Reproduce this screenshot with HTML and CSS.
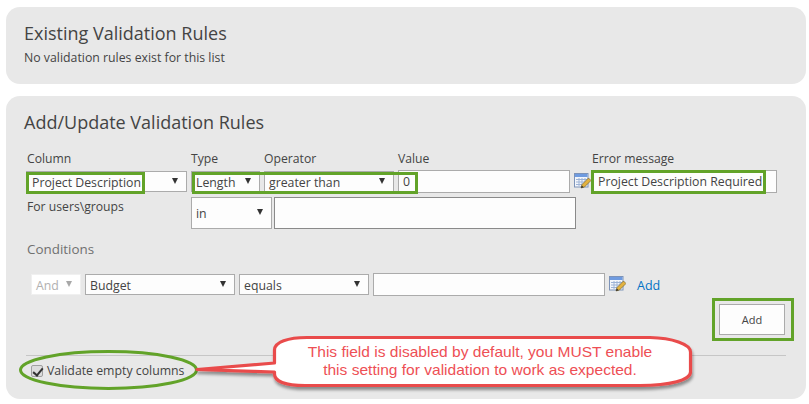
FILE: index.html
```html
<!DOCTYPE html>
<html lang="en">
<head>
<meta charset="utf-8">
<title>Validation Rules</title>
<link rel="stylesheet" href="styles.css">
</head>
<body>
<svg width="0" height="0" class="defs">
  <symbol id="picker" viewBox="0 0 17 17">
    <rect x="0.5" y="0.5" width="13.500" height="13.500" fill="#f3f6fb" stroke="#7d93b8"/>
    <rect x="1" y="1" width="12.500" height="3" fill="#6f9be0"/>
    <path d="M2 6.500h11M2 9h11M2 11.500h11M5 5v8M8 5v8M11 5v8" stroke="#9db3d6" stroke-width="1" fill="none"/>
    <path d="M7 15l1-3.500 6.500-6.500 2.500 2.500-6.500 6.500z" fill="#e3b23f" stroke="#6a5a2a" stroke-width="0.6"/>
    <path d="M7 15l.8-2.600 1.900 1.800z" fill="#2b2b2b"/>
  </symbol>
</svg>
<main class="page">
  <section class="panel panel-existing">
    <h2 class="title">Existing Validation Rules</h2>
    <p class="note">No validation rules exist for this list</p>
  </section>
  <section class="panel panel-add">
    <h2 class="title">Add/Update Validation Rules</h2>
    <div class="labels">
      <span class="lab w-column lab-first">Column</span>
      <span class="lab w-type">Type</span>
      <span class="lab w-op">Operator</span>
      <span class="lab w-value">Value</span>
      <span class="lab lab-error">Error message</span>
    </div>
    <div class="row row-main">
      <div class="sel w-column sel-first">Project Description</div>
      <div class="sel w-type">Length</div>
      <div class="sel w-op">greater than</div>
      <div class="inp w-value">0</div>
      <svg class="pick"><use href="#picker"/></svg>
      <div class="inp w-error">Project Description Required</div>
    </div>
    <div class="row row-users">
      <span class="lab w-column lab-first">For users\groups</span>
      <div class="sel w-in">in</div>
      <div class="inp w-users"></div>
    </div>
    <h3 class="cond-title">Conditions</h3>
    <div class="row row-cond">
      <div class="sel sel-off w-and">And</div>
      <div class="sel w-budget">Budget</div>
      <div class="sel w-equals">equals</div>
      <div class="inp w-condval"></div>
      <svg class="pick"><use href="#picker"/></svg>
      <a class="link" href="#">Add</a>
    </div>
    <div class="actions"><button class="btn" type="button">Add</button></div>
    <div class="footer">
      <label class="check"><input type="checkbox" checked>Validate empty columns</label>
    </div>
  </section>
</main>

<i class="mark m-project"></i>
<i class="mark m-typeop"></i>
<i class="mark m-error"></i>
<i class="mark m-add"></i>

<svg class="callout-art" width="809" height="404" viewBox="0 0 809 404">
  <defs>
    <filter id="sh" x="-5%" y="-20%" width="110%" height="150%">
      <feDropShadow dx="1" dy="3" stdDeviation="1.500" flood-color="#000" flood-opacity="0.4"/>
    </filter>
  </defs>
  <ellipse cx="108.500" cy="370" rx="88" ry="18.500" fill="none" stroke="#62a329" stroke-width="3"/>
  <path filter="url(#sh)" d="M307 337.500 H650 C672 338 690.500 344 690.500 352 V372 C690.500 380 670 385.500 640 385.500 H305 C285 385.500 274.500 381 274.500 374 V372 L197 369.500 L274.500 363 V350 C274.500 342 288 337.500 307 337.500 Z" fill="#fff" stroke="#e94c4c" stroke-width="3.200" stroke-linejoin="round"/>
</svg>
<p class="callout-text">This field is disabled by default, you MUST enable<br>this setting for validation to work as expected.</p>
</body>
</html>
```
FILE: styles.css
```css
* { box-sizing: border-box; }
html, body { margin: 0; padding: 0; }
body {
  width: 809px;
  height: 404px;
  overflow: hidden;
  background: #fff;
  font-family: "Open Sans", "Noto Sans", sans-serif;
  color: #444;
  position: relative;
}
.defs { position: absolute; }
.page { padding: 7px 3px 0 6px; display: flex; flex-direction: column; gap: 12px; }
.panel { background: #e8e8e8; border-radius: 14px; padding-left: 18px; }
.panel-existing { height: 77px; padding-top: 14px; }
.panel-add { height: 303px; padding-top: 14px; padding-left: 20px; }
.panel-add .title { margin-left: -2px; }
.title { margin: 0; font-size: 18px; line-height: 24px; font-weight: 400; color: #444; }
.note { margin: 4px 0 0; font-size: 12.300px; line-height: 17px; color: #444; }
.labels { display: flex; gap: 4px; margin-top: 16px; height: 17px; line-height: 17px; }
.lab { font-size: 12.200px; line-height: 17px; white-space: nowrap; }
.lab-first { padding-left: 1px; }
.lab-error { margin-left: 18px; }
.row { display: flex; gap: 4px; }
.row-main { margin-top: 4px; height: 21px; }
.row-main .inp { height: 23px; margin-top: -1px; padding-top: 1px; }
.row-users { margin-top: 5px; height: 32px; }
.row-users .lab { margin-top: 1px; }
.row-users .w-in { margin-right: -2px; }
.sel, .inp {
  background: #fdfdfd;
  border: 1px solid #ababab;
  font-size: 12.300px;
  line-height: 19px;
  padding-left: 4px;
  color: #444;
  white-space: nowrap;
  position: relative;
}
.sel { display: flex; align-items: center; padding-top: 1px; }
.sel-first { padding-left: 5px; }
.sel::after {
  content: "";
  position: absolute;
  right: 8px;
  top: 50%;
  margin-top: -4px;
  border-left: 3px solid transparent;
  border-right: 3px solid transparent;
  border-top: 6px solid #333;
}
.sel-off { background: #fff; border-color: #f0f0f0; color: #b1b1b1; }
.sel-off::after { border-top-color: #a8a8a8; }
.w-column { width: 161px; }
.w-type { width: 69px; }
.w-op { width: 130px; }
.w-value { width: 172px; }
.w-error { width: 185px; margin-left: -3px; padding-left: 5px; }
.w-in { width: 81px; }
.w-users { width: 302px; border-color: #8a8a8a; }
.w-and { width: 50px; margin-left: 5px; }
.w-budget { width: 150px; }
.w-equals { width: 130px; }
.w-condval { width: 232px; height: 23px; margin-top: -1px; }
.pick { width: 17px; height: 17px; margin-top: 2px; flex: none; }
.cond-title { margin: 10px 0 0 1px; font-size: 13.400px; line-height: 20px; font-weight: 400; color: #707070; }
.row-cond { margin-top: 15px; height: 21px; }
.link { color: #0072c6; font-size: 12.500px; line-height: 23px; text-decoration: none; margin-left: 7px; }
.actions { display: flex; justify-content: flex-end; padding-right: 21px; margin-top: 9px; }
.btn { width: 66px; height: 31px; background: #fdfdfd; border: 1px solid #ababab; font: 400 11px "Open Sans", sans-serif; color: #444; padding: 0; }
.footer { margin-top: 20px; width: 760px; border-top: 1px solid #c6c6c6; padding: 6px 0 0 5px; }
.check { display: flex; align-items: center; gap: 4px; font-size: 12.300px; line-height: 17px; }
.check input {
  appearance: none;
  margin: 0;
  width: 12px;
  height: 12px;
  background: #dcdcdc;
  border: 1px solid #a0a0a0;
  border-radius: 2px;
  position: relative;
}
.check input::after {
  content: "";
  position: absolute;
  left: 3px;
  top: 0;
  width: 4px;
  height: 8px;
  border: solid #333;
  border-width: 0 2px 2px 0;
  transform: rotate(40deg);
}

.mark { position: absolute; display: block; border: 3px solid #62a329; }
.m-project { left: 26px; top: 172px; width: 119px; height: 22px; }
.m-typeop { left: 192px; top: 172px; width: 226px; height: 22px; }
.m-error { left: 591px; top: 170px; width: 175px; height: 24px; }
.m-add { left: 712px; top: 298px; width: 82px; height: 43px; }

.callout-art { position: absolute; left: 0; top: 0; pointer-events: none; }
.callout-text {
  position: absolute;
  left: 273px;
  top: 343px;
  width: 414px;
  margin: 0;
  text-align: center;
  font: 15.550px/18px "Liberation Sans", Arial, sans-serif;
  color: #ee4f55;
}
```
